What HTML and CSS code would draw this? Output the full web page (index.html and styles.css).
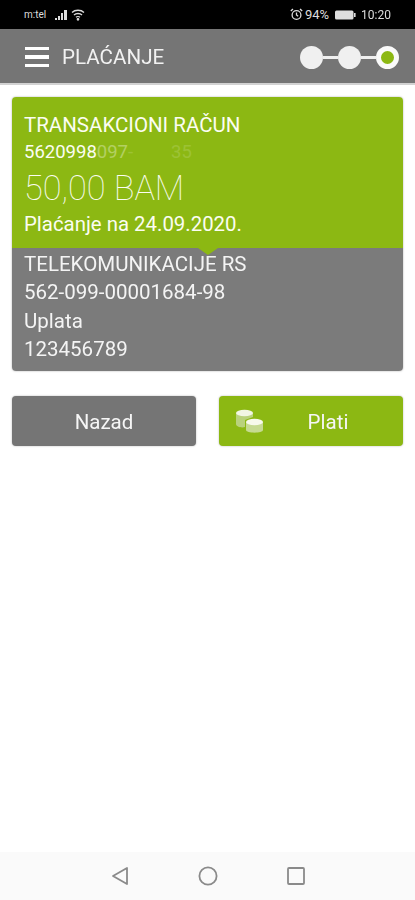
FILE: index.html
```html
<html>

<head>
    <meta charset="utf-8">
    <title>Plaćanje</title>
    <link rel="stylesheet" href="styles.css">
</head>

<body>
    <div class="phone">
        <div class="status-bar">
            <div class="status-left">
                <span class="carrier">m:tel</span>
                <svg class="signal" width="15" height="12" viewBox="0 0 15 12">
                    <rect x="0" y="9" width="2" height="2" fill="#ddd"></rect>
                    <rect x="3" y="7" width="2" height="4" fill="#ddd"></rect>
                    <rect x="6" y="4" width="2" height="7" fill="#ddd"></rect>
                    <rect x="9" y="1" width="3" height="10" fill="#ddd"></rect>
                </svg>
                <svg class="wifi" width="14" height="12" viewBox="0 0 14 12" fill="none" stroke="#ddd" stroke-width="1.3">
                    <path d="M1 3.5 C4 0.5 10 0.5 13 3.5"></path>
                    <path d="M3 6 C5 4 9 4 11 6"></path>
                    <path d="M5 8.3 C6 7.4 8 7.4 9 8.3"></path>
                    <circle cx="7" cy="10.3" r="0.7" fill="#ddd"></circle>
                </svg>
            </div>
            <div class="status-right">
                <svg width="13" height="13" viewBox="0 0 13 13" fill="none" stroke="#ddd" stroke-width="1.3">
                    <circle cx="6.5" cy="7" r="4.4"></circle>
                    <path d="M6.5 4.5 V7 L8.2 8.2"></path>
                    <path d="M0.8 3 L3 1 M12.2 3 L10 1"></path>
                </svg>
                <span class="battery-level">94%</span>
                <svg width="21" height="10" viewBox="0 0 21 10">
                    <rect x="0" y="0.5" width="18.5" height="9" rx="1.5" fill="#ddd"></rect>
                    <rect x="19" y="3" width="1.6" height="4" fill="#ddd"></rect>
                </svg>
                <span class="clock">10:20</span>
            </div>
        </div>

        <div class="header">
            <div class="menu-icon">
                <div></div>
                <div></div>
                <div></div>
            </div>
            <div class="title">PLAĆANJE</div>
            <div class="steps">
                <div class="step"></div>
                <div class="step-line"></div>
                <div class="step"></div>
                <div class="step-line"></div>
                <div class="step active"></div>
            </div>
        </div>

        <div class="content">
            <div class="card">
                <div class="card-top">
                    <div class="account-name">TRANSAKCIONI RAČUN</div>
                    <div class="account-number">5620998<span class="fade-1">097</span><span class="fade-2">-</span><span class="gap"></span><span class="fade-2">35</span></div>
                    <div class="amount">50,00 BAM</div>
                    <div class="pay-date">Plaćanje na 24.09.2020.</div>
                </div>
                <div class="card-bottom">
                    <div class="row">TELEKOMUNIKACIJE RS</div>
                    <div class="row">562-099-00001684-98</div>
                    <div class="row">Uplata</div>
                    <div class="row">123456789</div>
                </div>
            </div>

            <div class="buttons">
                <div class="btn btn-back">Nazad</div>
                <div class="btn btn-pay">
                    <svg class="coins" width="30" height="26" viewBox="0 0 30 26">
                        <path d="M1 5 V16 C1 19 7 20 10 19 V12 L18 9 V5 Z" fill="#b9d27c"></path>
                        <ellipse cx="9.5" cy="5" rx="8.5" ry="3.2" fill="#f2f6e4"></ellipse>
                        <path d="M11 14 V22 C11 25.5 28 25.5 28 22 V14 Z" fill="#c6da92"></path>
                        <ellipse cx="19.5" cy="14" rx="8.5" ry="3.2" fill="#f7f9ec"></ellipse>
                    </svg>
                    <span>Plati</span>
                </div>
            </div>
        </div>

        <div class="nav-bar">
            <svg width="18" height="20" viewBox="0 0 18 20" fill="none" stroke="#8a8a8a" stroke-width="1.8" stroke-linejoin="round">
                <path d="M16 2 V18 L2 10 Z"></path>
            </svg>
            <svg width="20" height="20" viewBox="0 0 20 20" fill="none" stroke="#8a8a8a" stroke-width="1.8">
                <circle cx="10" cy="10" r="8.6"></circle>
            </svg>
            <svg width="18" height="18" viewBox="0 0 18 18" fill="none" stroke="#8a8a8a" stroke-width="1.8" stroke-linejoin="round">
                <rect x="1" y="1" width="16" height="16" rx="1"></rect>
            </svg>
        </div>
    </div>
</body>

</html>
```

FILE: styles.css
```css
body {
    margin: 0;
    background: #fff;
    font-family: Roboto, "Liberation Sans", sans-serif;
}

/* the reference is a soft, upscaled capture */
.phone {
    width: 415px;
    height: 900px;
    display: flex;
    flex-direction: column;
    overflow: hidden;
    filter: blur(0.4px);
}

.status-bar {
    height: 29px;
    flex-shrink: 0;
    background: #000;
    color: #ddd;
    font-size: 11px;
    display: flex;
    align-items: center;
    justify-content: space-between;
    padding: 0 24px;
    box-sizing: border-box;
}

.status-left,
.status-right {
    display: flex;
    align-items: center;
}

.carrier {
    font-size: 10px;
    margin-right: 9px;
}

.wifi {
    margin-left: 1px;
}

.status-right {
    gap: 2px;
}

.battery-level {
    font-size: 13px;
    margin-right: 4px;
}

.clock {
    margin-left: 3px;
    font-size: 12px;
}

.header {
    height: 56px;
    box-sizing: border-box;
    flex-shrink: 0;
    background: #757575;
    border-bottom: 2px solid #d2d2d2;
    display: flex;
    align-items: center;
    padding: 2px 16px 0 25px;
}

.menu-icon {
    width: 24px;
    display: flex;
    flex-direction: column;
    gap: 5px;
}

.menu-icon div {
    height: 3.5px;
    background: #fff;
}

.title {
    margin-left: 13px;
    color: #f2f2f2;
    font-size: 20.6px;
}

.steps {
    margin-left: auto;
    display: flex;
    align-items: center;
}

.step {
    width: 23px;
    height: 23px;
    border-radius: 50%;
    background: #f0f0f0;
}

.step.active {
    width: 13px;
    height: 13px;
    background: #8cb813;
    border: 5px solid #fafafa;
}

.step-line {
    width: 15px;
    height: 3px;
    background: #f0f0f0;
}

.content {
    flex: 1;
    padding: 12px 12px 0;
}

.card {
    border-radius: 4px;
    overflow: hidden;
    box-shadow: 0 0 2px rgba(0, 0, 0, 0.35);
}

.card-top {
    position: relative;
    height: 151px;
    box-sizing: border-box;
    padding: 16px 12px 0;
    background: #8cb813;
    color: #fbfdf2;
}

/* little arrow pointing down to the payee block */
.card-top:after {
    content: "";
    position: absolute;
    left: 186px;
    bottom: -7px;
    border-left: 10px solid transparent;
    border-right: 10px solid transparent;
    border-top: 7px solid #8cb813;
}

.account-name {
    font-size: 20.5px;
    line-height: 24px;
}

.account-number {
    font-size: 18.5px;
    line-height: 20px;
    margin-top: 5px;
}

.fade-1 {
    opacity: 0.35;
}

.fade-2 {
    opacity: 0.15;
}

.gap {
    display: inline-block;
    width: 38px;
}

.amount {
    font-size: 34.3px;
    font-weight: 100;
    line-height: 40px;
    margin-top: 6px;
}

.pay-date {
    font-size: 20.4px;
    line-height: 24px;
    margin-top: 4px;
}

.card-bottom {
    height: 123px;
    box-sizing: border-box;
    padding: 2px 12px 0;
    background: #7b7b7b;
    color: #f4f4f4;
}

.row {
    font-size: 20.5px;
    line-height: 28.3px;
}

.buttons {
    display: grid;
    grid-template-columns: 184px 184px;
    justify-content: space-between;
    margin-top: 25px;
}

.btn {
    height: 50px;
    box-sizing: border-box;
    padding-top: 2px;
    border-radius: 4px;
    display: flex;
    align-items: center;
    justify-content: center;
    color: #f6f6f6;
    font-size: 20.5px;
    position: relative;
    box-shadow: 0 0 2px rgba(0, 0, 0, 0.3);
}

.btn-back {
    background: #757575;
}

.btn-pay {
    background: #8cb813;
    padding-left: 34px;
}

.coins {
    position: absolute;
    left: 16px;
    top: 12px;
}

.nav-bar {
    height: 48px;
    flex-shrink: 0;
    background: #fafafa;
    display: flex;
    align-items: center;
    justify-content: center;
    gap: 69px;
}
```
